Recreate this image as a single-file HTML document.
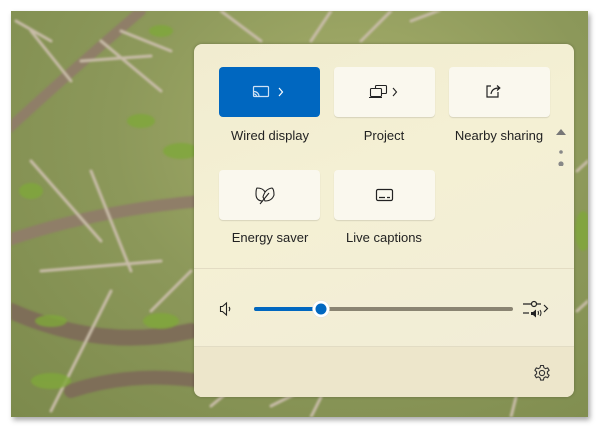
<!DOCTYPE html>
<html><head><meta charset="utf-8"><style>
*{margin:0;padding:0;box-sizing:border-box}
body{width:600px;height:429px;background:#fff;position:relative;overflow:hidden;font-family:"Segoe UI","Liberation Sans",sans-serif}
#photo{position:absolute;left:11px;top:11px;width:577px;height:406px;box-shadow:2px 3px 5px rgba(0,0,0,.35);overflow:hidden;background:radial-gradient(ellipse at 60% 30%,#a8b06c,#8c985a 50%,#7c8a4c)}
#panel{position:absolute;left:194px;top:44px;width:380px;height:353px;border-radius:8px;background:linear-gradient(160deg,#f1ecd0,#f4f0d4 40%,#f1ecd8);box-shadow:0 0 3px rgba(0,0,0,.25);overflow:hidden}
.tile{position:absolute;width:101px;height:50px;border-radius:4px;background:#faf8ee;box-shadow:0 1px 1px rgba(0,0,0,.12)}
.lbl{position:absolute;width:130px;text-align:center;font-size:13px;color:#222}
#foot{position:absolute;left:0;top:302px;width:380px;height:51px;background:#ede6cb;border-top:1px solid #e2dcc4}
</style></head><body>
<div id="photo">
<svg width="577" height="406" style="position:absolute;left:0;top:0;filter:blur(1px)">
<g stroke="#8f7e68" stroke-linecap="round" fill="none">
<path d="M-5 120 Q60 60 130 0" stroke-width="10"/>
<path d="M60 70 L20 20 M40 30 L5 10 M70 50 L140 45 M90 30 L150 80 M110 20 L160 40" stroke-width="3" stroke="#c8bca8"/>
<path d="M-5 230 Q80 200 190 190" stroke-width="12"/>
<path d="M0 300 Q90 340 180 320" stroke-width="16" stroke="#7e6e58"/>
<path d="M60 380 Q120 360 190 370" stroke-width="14" stroke="#7e6e58"/>
<path d="M20 150 L90 230 M80 160 L120 260 M30 260 L150 250 M100 280 L40 400 M140 300 L180 260" stroke-width="3" stroke="#c8bca8"/>
<path d="M210 0 L250 30 M320 0 L300 30 M380 0 L350 30 M400 10 L440 -5" stroke-width="3" stroke="#c8bca8"/>
<path d="M200 395 L230 370 M260 395 L290 380 M300 406 L310 386 M500 406 L505 386" stroke-width="3" stroke="#c8bca8"/>
<path d="M566 160 L577 150 M566 300 L577 290" stroke-width="3" stroke="#c8bca8"/>
</g>
<g fill="#7fa83a" opacity=".8">
<ellipse cx="150" cy="20" rx="12" ry="6"/><ellipse cx="170" cy="140" rx="18" ry="8"/><ellipse cx="130" cy="110" rx="14" ry="7"/>
<ellipse cx="40" cy="310" rx="16" ry="6"/><ellipse cx="150" cy="310" rx="18" ry="8"/><ellipse cx="40" cy="370" rx="20" ry="8"/>
<ellipse cx="572" cy="220" rx="8" ry="20"/><ellipse cx="20" cy="180" rx="12" ry="8"/>
</g>
</svg>
</div>
<div id="panel">
<div class="tile" style="left:25px;top:23px;background:#0067c0;box-shadow:none">
<svg width="101" height="50"><g stroke="#cfe2f5" stroke-width="1.2" fill="none"><rect x="34.5" y="19.5" width="15" height="10" rx="1"/><path d="M35 24.5 a5 5 0 0 1 5 5 M35 27 a2.5 2.5 0 0 1 2.5 2.5"/><path d="M60 21 l3.5 4 -3.5 4" stroke="#fff"/></g></svg></div>
<div class="tile" style="left:140px;top:23px">
<svg width="101" height="50"><g stroke="#222" stroke-width="1.1" fill="none"><rect x="41.5" y="18.5" width="11" height="8" rx="1"/><rect x="36.5" y="21.5" width="11" height="8" rx="1" fill="#faf8ee"/><path d="M35 30.5h13"/><path d="M59 21 l3.5 4 -3.5 4"/></g></svg></div>
<div class="tile" style="left:255px;top:23px">
<svg width="101" height="50"><g stroke="#222" stroke-width="1.2" fill="none"><path d="M49 25v5h-11v-11h4"/><path d="M42 27 q1-6 8-6 M48 18.5l2.8 2.5 -2.8 2.5"/></g></svg></div>
<div class="tile" style="left:25px;top:126px">
<svg width="101" height="50"><g stroke="#222" stroke-width="1.1" fill="none"><path d="M44 31 q-7 0 -7-7 q0-5 1-6 q6 0 8 4"/><path d="M46 31 q7 0 9-6 q0-6 -2-7 q-7 1 -9 9 z"/><path d="M41 34 l9-11"/></g></svg></div>
<div class="tile" style="left:140px;top:126px">
<svg width="101" height="50"><g stroke="#222" stroke-width="1.2" fill="none"><rect x="42.5" y="19.5" width="16" height="11" rx="1.5"/><path d="M45 27.5h6 M53 27.5h3"/></g></svg></div>
<div class="lbl" style="left:11px;top:84px">Wired display</div>
<div class="lbl" style="left:125px;top:84px">Project</div>
<div class="lbl" style="left:240px;top:84px">Nearby sharing</div>
<div class="lbl" style="left:11px;top:186px">Energy saver</div>
<div class="lbl" style="left:125px;top:186px">Live captions</div>
<svg style="position:absolute;left:360px;top:82px" width="14" height="40"><path d="M2 9 L7 3 L12 9z" fill="#777"/><circle cx="7" cy="26" r="1.8" fill="#888"/><circle cx="7" cy="38" r="2.6" fill="#888"/></svg>
<div style="position:absolute;left:0;top:224px;width:380px;border-top:1px solid #e3dcc3"></div>
<svg style="position:absolute;left:20px;top:255px" width="340" height="20"><g stroke="#222" stroke-width="1.1" fill="none"><path d="M6.5 7.5h2l4-3.5v12l-4-3.5h-2z M15 8 q1.5 2 0 4"/></g>
<path d="M42 10 H297" stroke="#8a8472" stroke-width="4" stroke-linecap="round"/>
<path d="M42 10 H106" stroke="#0067c0" stroke-width="4" stroke-linecap="round"/>
<circle cx="107" cy="10" r="8.5" fill="#fff" stroke="#ddd" stroke-width=".5"/><circle cx="107" cy="10" r="5.5" fill="#0067c0"/></svg>
<svg style="position:absolute;left:328px;top:255px" width="30" height="24"><g stroke="#222" stroke-width="1.2" fill="none"><path d="M1 5h8 M15 5h4"/><circle cx="12" cy="5" r="2.5"/><path d="M1 14h6"/><path d="M22 6 l3.5 3.5 -3.5 3.5"/></g><path d="M9 13h2l3-2.5v8l-3-2.5h-2z" fill="#222"/><path d="M16 12 q1 2 0 4 M18 11 q2 3 0 6" stroke="#222" fill="none"/></svg>
<div id="foot">
<svg style="position:absolute;left:339px;top:17px" width="18" height="18" viewBox="0 0 18 18"><g stroke="#333" stroke-width="1.1" fill="none"><path d="M7.6 1.5h2.8l.5 2.2 1.7 1 2.1-.8 1.4 2.4-1.7 1.5v2l1.7 1.5-1.4 2.4-2.1-.8-1.7 1-.5 2.2H7.6l-.5-2.2-1.7-1-2.1.8-1.4-2.4 1.7-1.5v-2L1.9 6.3l1.4-2.4 2.1.8 1.7-1z"/><circle cx="9" cy="9" r="2.6"/></g></svg>
</div>
</div>
</body></html>
